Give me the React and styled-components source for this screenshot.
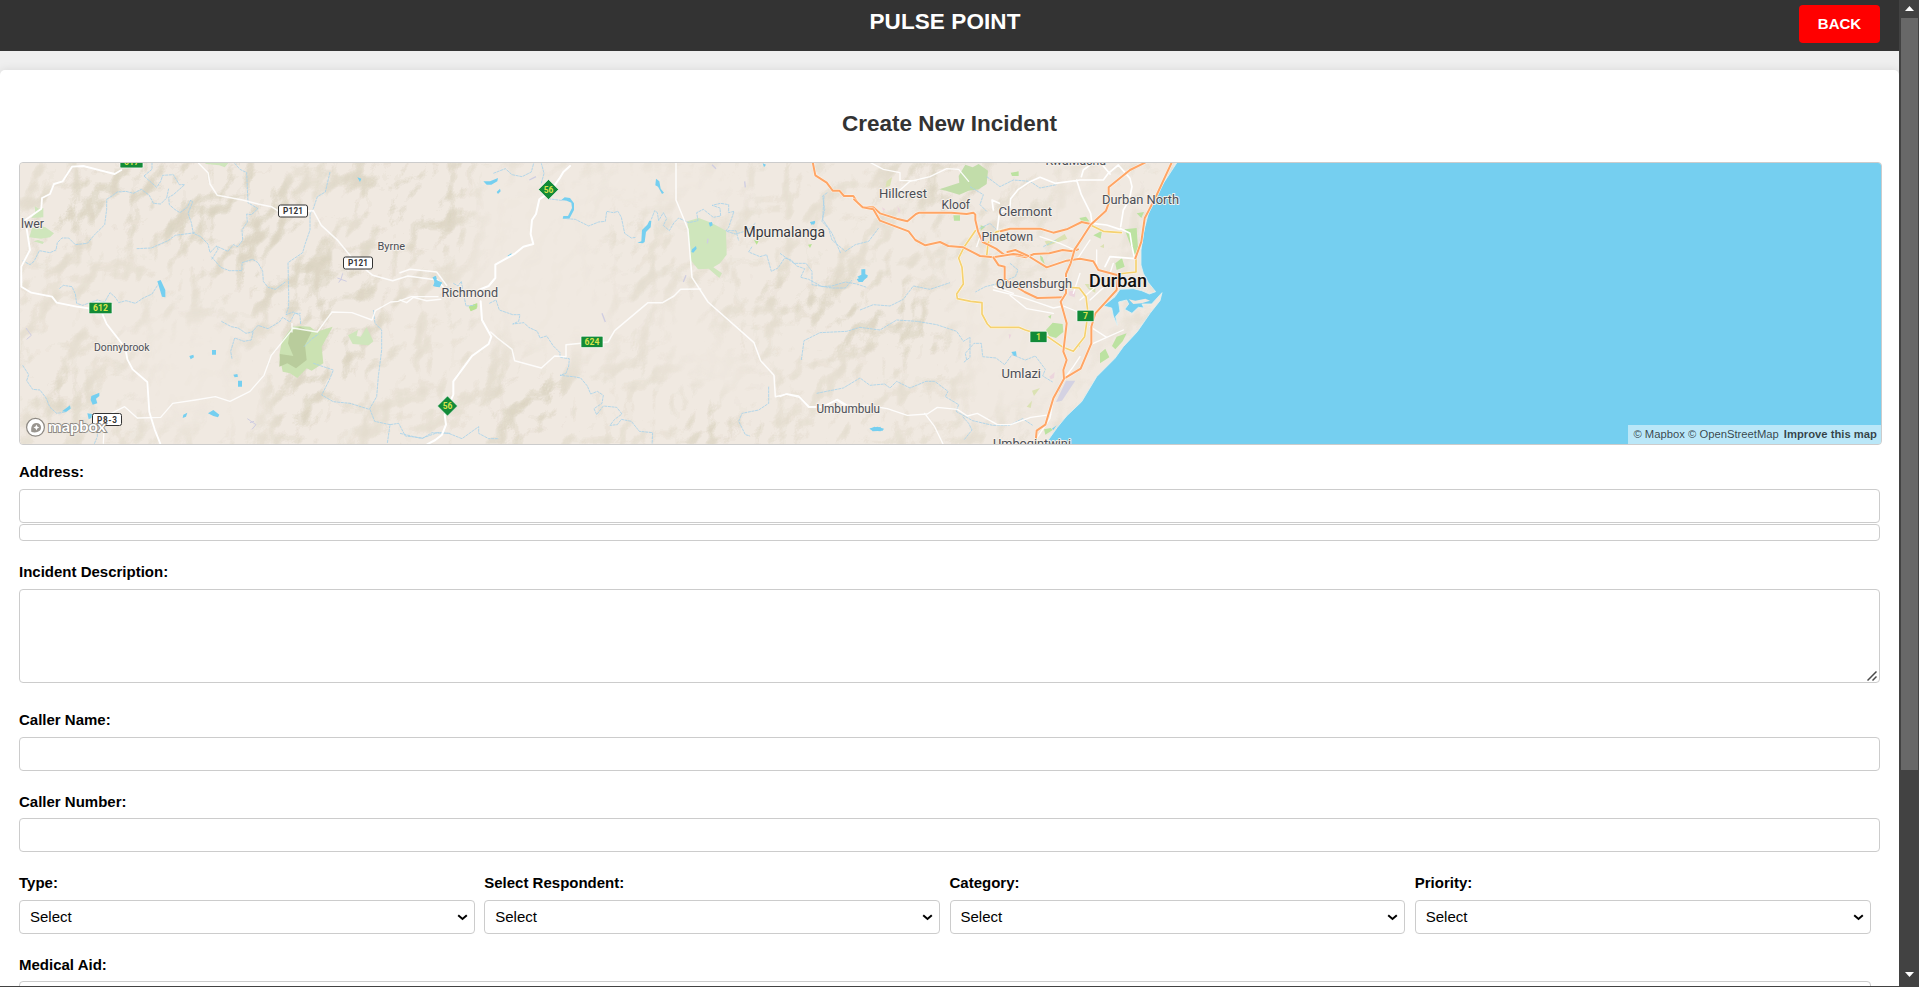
import React from "react";
import styled, { createGlobalStyle } from "styled-components";

const GlobalStyle = createGlobalStyle`
  * { box-sizing: border-box; }
  html, body { margin: 0; padding: 0; overflow: hidden; }
  body { font-family: "Liberation Sans", Arial, sans-serif; font-size: 15px; background: #efefef; color: #000; }
`;

const Shell = styled.div`
  display: flex;
  height: 100vh;
  border-bottom: 1px solid #424242;
`;

const Page = styled.div`
  flex: 1;
  min-width: 0;
  display: flex;
  flex-direction: column;
  overflow: hidden;
  background: #efefef;
`;

const Header = styled.header`
  display: grid;
  grid-template-columns: 1fr auto 1fr;
  flex: none;
  height: 51px;
  padding: 0 19px;
  background: #333;
`;

const Brand = styled.h1`
  grid-column: 2;
  margin: 9px 0 0;
  padding-right: 9px;
  font-size: 22.5px;
  line-height: 26px;
  letter-spacing: 0.1px;
  font-weight: bold;
  color: #fff;
`;

const BackButton = styled.button`
  justify-self: end;
  width: 81px;
  height: 38px;
  margin-top: 5px;
  padding: 0 0 2px;
  border: 0;
  border-radius: 4px;
  background: #f00;
  color: #fff;
  font: bold 15px "Liberation Sans", Arial, sans-serif;
`;

const Card = styled.main`
  flex: none;
  display: flex;
  flex-direction: column;
  height: 1300px;
  margin-top: 19px;
  padding: 41px 19px 0;
  background: #fff;
  border-radius: 5px;
  box-shadow: 0 0 10px rgba(0, 0, 0, 0.1);
`;

const Title = styled.h2`
  margin: 0 0 25px;
  text-align: center;
  font-size: 22.5px;
  line-height: 26px;
  color: #333;
`;

const MapFrame = styled.div`
  position: relative;
  flex: none;
  width: 1863px;
  height: 283px;
  border: 1px solid #ccc;
  border-radius: 4px;
  overflow: hidden;
  background: #f0e9e1;
`;

const MapSvg = styled.svg`
  display: block;
  width: 1861px;
  height: 281px;
`;

const Attribution = styled.div`
  position: absolute;
  right: 0;
  bottom: 0;
  display: flex;
  align-items: center;
  gap: 5px;
  height: 19px;
  padding: 0 4px 1px 5px;
  background: rgba(255, 255, 255, 0.5);
  color: rgba(0, 0, 0, 0.72);
  font-size: 11.25px;
  white-space: nowrap;
`;

const Field = styled.div`
  display: flex;
  flex-direction: column;
  margin-top: ${(p) => p.$gap}px;
`;

const Label = styled.label`
  margin-bottom: ${(p) => (p.$tight ? 8 : 9)}px;
  font-weight: bold;
  line-height: 17px;
`;

const TextInput = styled.input`
  width: 100%;
  height: 34px;
  padding: 0 9px;
  border: 1px solid #ccc;
  border-radius: 4px;
  background: #fff;
`;

const SuggestionList = styled.ul`
  height: 17px;
  margin: 1px 0 0;
  padding: 0;
  border: 1px solid #ccc;
  border-radius: 4px;
  list-style: none;
`;

const ControlWrap = styled.div`
  position: relative;
  display: flex;
`;

const TextArea = styled.textarea`
  display: block;
  width: 100%;
  height: 94px;
  border: 1px solid #ccc;
  border-radius: 4px;
  resize: none;
`;

const ResizeGrip = styled.svg`
  position: absolute;
  right: 3px;
  bottom: 2px;
  width: 10px;
  height: 10px;
  pointer-events: none;
`;

const SelectRow = styled.div`
  display: grid;
  grid-template-columns: repeat(4, 1fr);
  margin-top: ${(p) => p.$gap}px;
`;

const Cell = styled.div`
  display: flex;
  flex-direction: column;
  padding-right: 9.4px;
  grid-column: span ${(p) => p.$span || 1};
`;

const Select = styled.select`
  appearance: none;
  width: 100%;
  height: 34px;
  padding: 0 10px 2px;
  border: 1px solid #ccc;
  border-radius: 4px;
  background: #fff;
  color: #000;
  font: 15px "Liberation Sans", Arial, sans-serif;
`;

const Chevron = styled.svg`
  position: absolute;
  right: 7px;
  top: 14px;
  width: 11px;
  height: 7px;
  pointer-events: none;
`;

const ScrollTrack = styled.div`
  flex: none;
  display: flex;
  flex-direction: column;
  align-items: center;
  width: 20px;
  background: #424242;
`;

const ScrollThumb = styled.div`
  width: 17px;
  height: 752px;
  margin: 7px 0 auto 1px;
  background: #686868;
`;

const Arrow = styled.svg`
  flex: none;
  width: 9px;
  height: 5px;
  margin: ${(p) => p.$margin};
`;

const places = [
  ["lwer", 21, 229, 23, 13], ["Byrne", 377.5, 250.7, 27.5, 11.5], ["Richmond", 441.5, 298, 56.5, 13],
  ["Donnybrook", 94, 352, 55.5, 11.5], ["Mpumalanga", 743.5, 238, 81.5, 14, "#35373b"],
  ["Umbumbulu", 816.5, 413.7, 63.5, 12], ["Hillcrest", 879, 199, 48, 13], ["Kloof", 941.5, 209.3, 28.5, 13],
  ["Clermont", 998.5, 217, 53.5, 13], ["Pinetown", 981.5, 242, 51.5, 13], ["Queensburgh", 996, 288.7, 76, 13],
  ["Durban North", 1102, 204.3, 77, 13], ["Umlazi", 1001.5, 378.5, 39.5, 13], ["KwaMashu", 1045.5, 165.3, 60.5, 13],
  ["Umbogintwini", 993, 449, 78, 13],
];

const shields = [
  ["617", 120, 156.5, 23], ["612", 89, 302.3, 23], ["624", 581, 336.2, 22], ["7", 1077, 310.2, 17], ["1", 1030, 331.2, 17],
];
const plates = [["P121", 278.5, 205], ["P121", 343.5, 257], ["P8-3", 92.5, 413.5]];
const diamonds = [[548.5, 189.5], [447.5, 406]];

const Road = ({ d, w = 4, c = "#fff", o = 1 }) => <path d={d} fill="none" stroke={c} strokeWidth={w} strokeOpacity={o} strokeLinejoin="round" strokeLinecap="round" />;
const River = ({ d }) => <path d={d} fill="none" stroke="#a9d3ea" strokeWidth="2.6" strokeLinejoin="round" strokeDasharray="9 2" />;
const Highway = ({ d }) => (<><Road d={d} w={9} c="#fdf4ea" /><Road d={d} w={6} c="#ffa565" /></>);
const Arterial = ({ d }) => (<><Road d={d} w={8} c="#fff8e6" /><Road d={d} w={5} c="#f5d170" /></>);

function WestMap() {
  return (
    <g transform="translate(0 150) scale(.333333)">
      <g fill="#cfe6bc">
        <path d="M104 168l12 8 14-2v28l-36 2 12-16zM96 234l26-6 14 4 26 18-12 12-28 4-34-4zM100 274l14-4 18 6-4 6zM612 36h76l-14 16-16-6-40-4z" />
        <path d="M846 572 876 530 900 528 930 530 950 545 998 530 965 590 970 640 935 662 920 655 892 684 870 670 848 665 838 615z" fill="#cbe2b2" />
        <path d="M870 545 900 530 935 545 915 585 920 630 888 655 862 640 838 650 840 612 880 618 864 580z" fill="#b9cc9c" />
        <path d="M1044 556l30-16-4 18 12 2 18-28 20 42-14 12-48-4z" />
        <path d="M1406 470l24-10v16l-18 8z" fill="#b8e293" />
      </g>
      <g fill="#75cff0">
        <path d="M472 394l10-4 14 30v22l-10-2zM274 738l24-10v10l-10 8 4 14-14 4-6-14zM186 784l24-18 2 10-14 10zM262 790l14 2-2 12-8 4zM568 618l12-4 2 8-10 6zM636 600h12v14h-12zM700 674l12-2 2 8-10 2zM714 692h12v18h-12zM550 794l12-6-4 12-10 4zM624 790l16-10 18 14-4 8-14-4zM1072 82l12 4-4 10zM1298 382l10-4 2 12 16 8-8 14-18-4 4-12z" />
      </g>
      <River d="M432 78l24-20v-22M432 78l38 34 12-18 6-18 32-2 18 30 16 0-34 30-14 8 2 22 16 14 16 10 22-16 10-22 6 6-14 34 10 28 6 32 22 10 22 22 6 26 20-20 4 10-20 32M634 320l28 32 26 10 38 0v-24l32-10 16 10 14 26 2 30 14 18 22 6 30-22" />
      <River d="M704 40l16 18 20 10 4 90 30 18-20 18-14-2 2 24-16 24 2 30-14 20-14-6-16 20-36-16M990 66l-14 60-24 14-12 36-10 16 0 48-16 46-6 22-44 30 2 90 0 42-8 24 22-8 20 10 2 28" />
      <River d="M68 332l22 12 12-10 16-32 32 6 18-8 4-22 14-14 20 0 20 20 36-4 20-24 32-32 6-46 0-30 16-10 16-12 26-2 22 6 24-12 24 18 12 24 22 2 18-18 6-28M410 296l44-2 50-22 22-16 60-8" />
      <River d="M178 416l12-10 26 4 10 22 4 28 18 6 44-16 22 6 16-28 16 14 10 16 22-6 28 8 24-16 26-12 18-28M68 646l18 28-6 18 18 26 22 2 18 24 12 28 20 18 28-4M292 830v30l-10 24M664 514l30 16 20 4 24 16 18-4 18-20 30 10 34-20 10-14 22 14 14-26 18 0M696 626l-4-22 12-40 28 10 22-4 6-28M912 590l24-24 20-14" />
      <River d="M940 640 1000 660 988 690 965 735 1000 755 1050 760 1108 778 1130 740 1135 680 1145 600 1145 540 1125 520 1120 480M1110 778l14 36 46 10-8 56M1170 824l26-4 20 38 52 6 44-16 40 2" />
      <Road d="M64 410l0-60 26-50-14-90 48-34 2-32 24-12 12-30 26-8 28-44 34-2 54 14 40 10 20-12M64 410l30 18 62 12 14 18 60 12 72 10 18 42 56 72 6 34 16 30 44 38 6 90 16 52 18 46" w={5.5} />
      <Road d="M596 40l28 28 6 34 22 34 76 14 46 12 40 8 26 16 100-4 24 44 50 46 44 54 60 50 60 16 46-14 60 8 28 4 42 50" w={4.5} o={0.85} />
      <Road d="M310 880l4-80 60-30 38 34 70-2 36-42 68-10 60-10 44 14 60-30 42-48 22-60 60-74 4-8 74 12 44-60 60 2 60 22 10-28 46-26 22-2 40-14h80M876 546v-26" w={4} o={0.85} />
      <g fill="none" stroke="#cfcde2" strokeWidth="3"><path d="M1012 384l28 10M1022 392l6-22M1016 398l6-10M78 534l16 22-14 12M742 806l26 18-12 14M750 818l12-4" /></g>
    </g>
  );
}

function MiddleMap() {
  return (
    <g transform="translate(400 150) scale(.333333)">
      <path d="M862 214l34-10 38 14 44 24 2 72-20 26-20 12 26 18-8 14-32-28-32 2-22-28z" fill="#cfe6bc" />
      <path d="M208 468l24-8v12l-20 10zM1224 284l12-2-6 12zM1062 270l14 4-6 10z" fill="#b8e293" />
      <g fill="#75cff0">
        <path d="M250 94l20 0 24-10-2 10-18 10h-14zM290 126l10-10 2 8-8 8zM768 86l10 8 4 22 10 12-6 4-12-22-8-4zM98 382l10-4 2 12 16 8-8 14-18-4 4-12zM322 318l12-8 2 8-8 4zM876 298l12-10 2 8-10 12-6-2zM926 218l10-2 2 10-8 4zM1230 216l16-4-4 10-8 2zM1088 40l10 4-6 8zM1370 388l16-8 4-22 6 0 0 18 8 4-12 10-4 6-12 0zM1408 836l16-6 8 4 10-4v14l-20-2z" />
        <path d="M484 150 494 142 510 144 522 160 522 180 508 206 488 206 490 198 504 198 516 174 514 158 500 152z" />
        <path d="M748 212l6 0-2 20-14 14-4 30-6 4-16-2 12-4 2-34 16-16z" />
      </g>
      <River d="M444 146l46 6M500 206l26 2 40 20 30-12 20-2 4-30 20 4 14-4 10 18 10 48 20 14 14-2M754 208l10-26 8 6 4 24 14-24 10 18-10 20 18 16 14-24 14-14 30 14 28-6-4-24 20-10 30 24 22-4-2-24-24-8 26-6 24 4 0 24 16-4-16 48-8 10h30l8 30" />
      <River d="M280 70l36-14 20 18 30 6 28-14 8-30M424 100l8-30-8-30M160 400l14 8 10-14 4 24 10 50 26-2M268 460l20-10 10 30 40 14 22 0-4 20-18 8 34-4 14 14 26 12 8 20 20-6 20 30 20 20 0 14 28 4-2 22-8 22-18 6 40 4 22 4 20 24 10 24 20-8 18 12-4 24-24 16 8 18 20-26 40 4 16 20-22 16-14 18 22-2 12-16 30 6 24 30 40 4-2 40" />
      <River d="M1282 128l-14 10 6 40-8 36 20 22 10 34 40 34 30-20 40-10 30-40M1066 220l-24 22-36 10-26-8M1056 290l-10 16 34 14 20-6 14 50 20-10 20-30 20 6 16 18 24 8-12 26 24 6 40 22 30-2 40-12 34 6 30 10M1106 710l0 50-30 20-50 10-10 24 20 40 14 4M0 850l66 16 30-18 50 2 40 16 50-36 0 20 30 16h30" />
      <Road d="M80 884l26-14 20-16 12-30-4-30 26-60v-40l56-76 50-36 8-22-28-50-4-56M240 430l-4-10 30-12 20-24 0-40 60-34 24-20 30-8-8-30 4-42 12-18 10-44 30-20 30-42 12-20 20-18" w={6} />
      <Road d="M0 368l30-10 60 6 20 2 30 40M0 450l20 8 20-16 40 10 42-4M272 546l20 18 44 34 8 34 80 22 40-36 34 2v-36l46-4 80-4 20-34 100-84h44l34-20 20-20 60-1" w={4.5} o={0.85} />
      <Road d="M828 40l0 110 36 88 12 144 48 74 138 122 20 54 40 44 4 64 36-8 34 6 30 34 40 0 44-22 30 20" w={4.5} o={0.9} />
      <g stroke="#cfcde2" strokeWidth="4"><path d="M388 90l20-10M606 490l10 26M850 396l8-20M922 280l2-14M1034 94l2 18M936 44l12 12" /></g>
    </g>
  );
}

function CoastMap() {
  return (
    <g transform="translate(780 150) scale(.333333)">
      <path
        d="M1192 36 1150 100 1128 140 1105 190 1090 250 1083 300 1083 345 1090 370 1105 398 1127 425 1108 432 1085 422 1060 416 1020 418 1005 440 985 456 970 468 995 474 1000 498 1012 526 1007 500 1020 484 1016 456 1040 450 1046 462 1034 478 1056 490 1075 472 1092 474 1086 462 1115 462 1146 428 1140 452 1110 490 1072 545 1030 590 1005 625 950 680 905 755 860 798 832 832 780 905 3400 905 3400 36z"
        fill="#75cff0" stroke="#e3f1f0" strokeWidth="2.5"
      />
      <path d="M1046 448 1066 452 1096 446 1110 452 1085 460 1060 462z" fill="#f0e9e1" />
      <g fill="#c9e3b4">
        <path d="M478 118l60-20-2-20 20-34 22 8 18-10 28 20-4 40-24 16-30 4-28 12-40-12z" fill="#c2ddaa" />
        <path d="M692 68l24-4v14h-20zM798 540l20-22 30 4 2 24-22 18-20-6zM996 588l14-28 30-10-12 24-22 24zM960 610l16-14 12 26-28 18zM1006 340l20-16 8 26-24 10zM1034 238l36-4 4 60-8 24-10-20zM780 316l8 6 6 20-12-12zM520 196h20v16h-18zM898 204l20-4 10 14-20 4zM792 838l20-4 6 6-22 14zM804 500l10-6-2 12zM890 584l12-6-4 14zM602 226l14 4-14 12zM940 256l26-14-4 24zM1070 190l22-4-8 18z" fill="#bce2a1" />
        <path d="M794 274l30-4 30-18 8 14-20 8-40 14zM320 94l16-12-6 26-14 4zM756 722l24-8-18 24zM740 770l16-18-4 22zM914 402h32v26l-20-10zM960 290l12-8v12z" fill="#dbe2b3" />
      </g>
      <g fill="#ecd5dd"><path d="M352 168l10 14-6 8zM686 552l8 2-6 14zM808 680l16-14-2 18-10 4zM868 424l18-2-2 20-18-6zM306 172l10 6-6 6z" /></g>
      <path d="M858 692l28 0-40 60-18 4zM832 718l10-4-4 12z" fill="#d4d2e2" />
      <path d="M232 380l12-6 0-16 10 0 0 14 10 4-16 18zM90 216h16l-4 8zM694 606l14-2 2 14-8 0zM270 836l22-6 20 6-4 6-30 2zM816 836l14-10-10 14z" fill="#75cff0" />
      <River d="M132 138l-4 70 28 42 26 60M0 310l42 30 36 0 18 24 0 40 60 10 40 0 20-24M64 630l8-58 48-24 80-4 40-12 60 8 50-30 60 4 60 10 60 20 20 30 20-12 0 60-20 16M240 480l40-16 50 4 40-20 30-40 50 10 60-20" />
      <River d="M110 730l80-16 50-30 30 22 44-4 16 12 20-20 40 20 48-20 26 0 40 30-8 16 40 24-8 20 50 28 60 14 50 0 40-20 30 20M560 630l-4-20 26-30 22 0 4 40 40 4 26 20 22-30 40 16 30-12 30 40-8 20 30 18M548 800l18 20 10 20-24 30" />
      <River d="M620 80l40 30 40-20 50 4 30 20 50-10M570 110l40 24-10 30 20 20M690 340l24 20-8 20-50 20-40 10-30 16M590 240l40-20 20 20M790 290l40-20" />
      <Road d="M330 130l30-10 30-26 60-14 50-24 36 2 30 36M268 36l42 22 50 10 0 24 50 0" w={4} o={0.9} />
      <Road d="M652 238 658 190 690 172 692 146 715 118 750 95 780 82 825 100 900 90 970 90 985 70 1015 45 1050 85 1056 110 1048 150 1030 180 1022 230M1022 236 1050 250 1056 290 1064 326 990 320 975 350M890 90l14 44 28 56 4 30M904 80 910 60 940 38M960 36l30 36M936 220 980 225 1020 238M640 180 636 150 658 160" w={5} />
      <Road d="M640 420l80 20 60 20 40 14 30-6 60 24M930 530 980 562 1030 540M980 562 940 580M900 450 960 400M930 450 985 400M690 436l50 40 80 14M1000 340l-12 36M850 690l30-40 20-30M820 745l-10 60-40 60M700 430l-60-20M600 260l-10 30M780 260l60 20 44 20M950 300l0 50M890 330l40-60M900 370l-20 60" w={4} o={0.9} />
      <Road d="M0 740l18-8 40 10 30 28 40 0 44-22 30 18 60 0 60 10 60 20 60-4 30-20 60 6 30 20 30-8 60 34 40 0 60-22 60-8M434 790l30 40 26 54" w={4} o={0.9} />
      <Arterial d="M586 242l-34 50-16 32 10 28 4 50-20 30 2 14 40 8 34 4 0 34 16 30 10 10h84l20 8 70 22 40 28 34 14 34-44 10-70-6-50-20-26-30-2M620 320l4-40 24-34 30-8M930 224l40 20 54 4M1012 372l56-6v-40" />
      <Highway d="M98 36l8 40 34 22 18 24h20l14 16h28l14 22 12 12 34 0 20 18 50 16 32 8 26-22 10-4 96 0 46 4 20-4 6 6 0 16 8 34 14 32 40 20 24 18h28l38 8 24-10 46-2 40-10 30 4 16-6" />
      <Highway d="M222 148 248 172 280 178 300 212 386 244 406 270 436 286 480 276 505 288 550 292 600 318 640 322 700 312 745 318 800 352 860 332 900 326 940 334 955 360 1014 376 1010 420 946 490 934 530 934 580 902 656 852 686" />
      <Highway d="M662 244 690 236 780 236 820 248 860 238 905 216 932 222M640 322 656 346 674 350 674 388 734 426 772 444 852 442M682 306 706 300 745 318" />
      <Highway d="M1095 38 1050 60 986 112 986 160 978 182 932 224 905 266 884 298 872 340 858 372 858 430 842 455 860 520 850 605 860 630 850 660 852 686 820 745 796 824 770 842 766 884M1174 40 1130 135 1108 178 1094 205 1084 275 1066 325" />
    </g>
  );
}

function MapLayer() {
  return (
    <MapSvg viewBox="20 163 1861 281">
      <defs>
        <filter id="relief" x="0" y="0" width="100%" height="100%" colorInterpolationFilters="sRGB">
          <feTurbulence type="fractalNoise" baseFrequency=".026 .022" numOctaves="3" seed="11" result="n" />
          <feColorMatrix in="n" type="matrix" values="0 0 0 0 0  0 0 0 0 0  0 0 0 0 0  1 0 0 0 0" />
          <feDiffuseLighting surfaceScale="15" diffuseConstant="1.08" lightingColor="#fff">
            <feDistantLight azimuth="225" elevation="54" />
          </feDiffuseLighting>
          <feColorMatrix type="matrix" values="0 0 0 0 .80  0 0 0 0 .775  0 0 0 0 .68  -1 0 0 0 1" />
          <feComponentTransfer><feFuncA type="discrete" tableValues="0 0 .1 .24 .36 .46 .52 .56 .6 .6" /></feComponentTransfer>
        </filter>
        <filter id="soften"><feGaussianBlur stdDeviation="14" /></filter>
        <mask id="hills">
          <rect x="0" y="150" width="1300" height="310" fill="#888" />
          <g fill="#fff" filter="url(#soften)">
            <path d="M90 160h180l60 80 60 20-10 90-60 90H270l30-110-70-40-80-60-110 20-15-30zM320 160h170v80l-90 20zM600 200l40 10-40 50zM500 380l60-10 10 60-80 20zM690 380l70 10 10 50-80 10zM730 270l260 20 0 90-140-30zM880 160h120v40l-60 10zM30 340l60 60-40 20z" />
          </g>
          <g fill="#111" filter="url(#soften)"><path d="M130 320h90l30 60 20 40-110 20-20-70zM480 170h120v60l30 130h-110l-60-60zM600 160h140v50h-140zM655 280l100 80v60l-90-50zM930 280h130l0 140-90-10zM1060 170h70v150l-70 110z" /></g>
        </mask>
      </defs>
      <rect x="20" y="163" width="1861" height="281" fill="#f0e9e1" />
      <g mask="url(#hills)"><rect x="20" y="163" width="1160" height="281" filter="url(#relief)" /></g>
      <WestMap />
      <MiddleMap />
      <CoastMap />
      <g fontFamily='"Open Sans", Roboto, sans-serif' textAnchor="middle">
        {plates.map(([t, x, y], i) => (
          <g key={i}>
            <rect x={x} y={y} width="29" height="12" rx="2" fill="#fff" stroke="#333" />
            <text x={x + 14.5} y={y + 9} fontFamily="Roboto, sans-serif" fontSize="8.2" fontWeight="700" fill="#333" textLength="20">{t}</text>
          </g>
        ))}
        {shields.map(([t, x, y, w]) => (
          <g key={t}>
            <rect x={x} y={y} width={w} height="11.4" rx="1" fill="#128a38" stroke="#fff" strokeWidth=".7" />
            <text x={x + w / 2} y={y + 8.8} fontFamily="Roboto, sans-serif" fontSize="8.6" fontWeight="700" fill="#d8e34c">{t}</text>
          </g>
        ))}
        {diamonds.map(([x, y]) => (
          <g key={x}>
            <path d={`M${x} ${y - 10}l10 10-10 10-10-10z`} fill="#128a38" stroke="#fff" strokeWidth=".5" />
            <text x={x} y={y + 3} fontFamily="Roboto, sans-serif" fontSize="8.4" fontWeight="700" fill="#d8e34c">56</text>
          </g>
        ))}
      </g>
      <g fontFamily="Roboto, sans-serif" stroke="#f6f1eb" strokeWidth="1.8" strokeLinejoin="round" paintOrder="stroke">
        {places.map(([t, x, y, w, s, c]) => (
          <text key={t} x={x} y={y - 0.6} fontSize={s} textLength={w} lengthAdjust="spacingAndGlyphs" fill={c || "#4b4e55"}>{t}</text>
        ))}
        <text x="1089" y="287.2" fontSize="17.5" fontWeight="500" textLength="58" lengthAdjust="spacingAndGlyphs" fill="#111">Durban</text>
      </g>
      <g>
        <circle cx="35.5" cy="427.3" r="8.9" fill="#fff" stroke="#8d8983" strokeWidth="1.2" />
        <path d="M31.4 432c-.8-5 .8-9 4.8-9 3 0 4.9 2 4.9 4.6 0 4-4.4 5.6-9.7 4.4z" fill="#99958f" />
        <path d="M36.4 424.6l.9 2 2 .9-2 .9-.9 2-.9-2-2-.9 2-.9z" fill="#fff" />
        <text x="48" y="431.6" fontFamily="Lato, sans-serif" fontSize="15.5" fontWeight="700" fill="#fff" stroke="#8d8983" strokeWidth="1.8" paintOrder="stroke" textLength="58" lengthAdjust="spacingAndGlyphs">mapbox</text>
      </g>
    </MapSvg>
  );
}

const selects = ["Type:", "Select Respondent:", "Category:", "Priority:"];

export default function App() {
  return (
    <>
      <GlobalStyle />
      <Shell>
        <Page>
          <Header>
            <Brand>PULSE POINT</Brand>
            <BackButton>BACK</BackButton>
          </Header>
          <Card>
            <Title>Create New Incident</Title>
            <MapFrame>
              <MapLayer />
              <Attribution>
                <span>© Mapbox © OpenStreetMap</span>
                <b>Improve this map</b>
              </Attribution>
            </MapFrame>
            <Field $gap={18}>
              <Label>Address:</Label>
              <TextInput />
              <SuggestionList />
            </Field>
            <Field $gap={22}>
              <Label>Incident Description:</Label>
              <ControlWrap>
                <TextArea />
                <ResizeGrip viewBox="0 0 10 10">
                  <path d="M.5 9.5l9-9M5.5 9.5l4-4" fill="none" stroke="#4a4a4a" strokeWidth="1.5" strokeDasharray="none" />
                </ResizeGrip>
              </ControlWrap>
            </Field>
            <Field $gap={28}>
              <Label>Caller Name:</Label>
              <TextInput />
            </Field>
            <Field $gap={22}>
              <Label $tight>Caller Number:</Label>
              <TextInput />
            </Field>
            <SelectRow $gap={22}>
              {selects.map((name) => (
                <Cell key={name}>
                  <Label>{name}</Label>
                  <ControlWrap>
                    <Select><option>Select</option></Select>
                    <Chevron viewBox="0 0 11 7">
                      <path d="M1.2 1.2L5.5 5l4.3-3.8" fill="none" stroke="#000" strokeWidth="2" />
                    </Chevron>
                  </ControlWrap>
                </Cell>
              ))}
            </SelectRow>
            <SelectRow $gap={22}>
              <Cell $span={4}>
                <Label $tight>Medical Aid:</Label>
                <TextInput />
              </Cell>
            </SelectRow>
          </Card>
        </Page>
        <ScrollTrack>
          <Arrow viewBox="0 0 9 5" $margin="6px 0 0 1px"><path d="M4.5 0L9 5H0z" fill="#fff" /></Arrow>
          <ScrollThumb />
          <Arrow viewBox="0 0 9 5" $margin="0 0 9px 1px"><path d="M0 0h9L4.5 5z" fill="#fff" /></Arrow>
        </ScrollTrack>
      </Shell>
    </>
  );
}
